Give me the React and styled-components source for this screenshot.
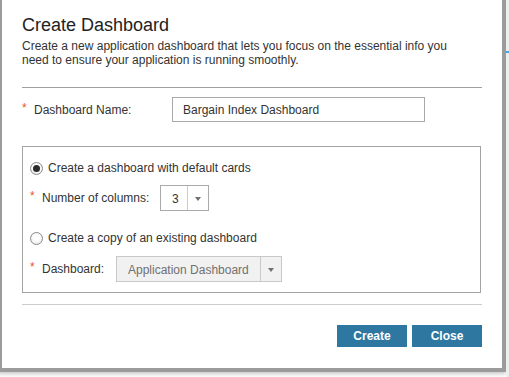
import React from 'react';
import styled, { createGlobalStyle } from 'styled-components';

const GlobalStyle = createGlobalStyle`
  html, body {
    margin: 0;
    padding: 0;
    background: #ffffff;
    overflow: hidden;
  }
  body {
    font-family: "Liberation Sans", Arial, sans-serif;
    color: #333;
  }
`;

const Page = styled.div`
  display: flex;
  width: 509px;
  height: 377px;
  background: #fff;
`;

const Dialog = styled.div`
  box-sizing: border-box;
  flex: none;
  width: 508px;
  height: 376px;
  margin: -4px 0 0 -2px;
  border: 4px solid #9b9b9b;
  background: #fff;
  box-shadow: 0 2px 4px rgba(0, 0, 0, 0.22);
  padding: 14px 20px 0 20px;
  display: flex;
  flex-direction: column;
`;

const Backdrop = styled.div`
  flex: 1;
  background: #eeeeee;
  display: flex;
  flex-direction: column;
`;

const BackdropTick = styled.div`
  margin-top: 51px;
  height: 2px;
  background: #4aa3d6;
`;

const Title = styled.h1`
  margin: 0;
  font-size: 18px;
  line-height: 22px;
  font-weight: normal;
  color: #222;
`;

const Description = styled.p`
  margin: 3px 0 0 0;
  width: 440px;
  font-size: 12px;
  line-height: 14px;
  color: #333;
`;

const Rule = styled.div`
  height: 1px;
  background: ${p => p.$light ? '#cccccc' : '#a0a0a0'};
  margin-top: ${p => p.$top}px;
`;

const FieldRow = styled.div`
  display: flex;
  align-items: center;
  margin-top: ${p => p.$top || 0}px;
`;

const LabelCell = styled.div`
  display: flex;
  align-items: center;
  width: ${p => p.$width}px;
  flex: none;
  font-size: 12px;
  color: #333;
`;

const Required = styled.span`
  color: #e0592a;
  font-size: 12px;
  width: 12px;
  align-self: flex-start;
  margin-top: -2px;
`;

const TextInput = styled.div`
  box-sizing: border-box;
  width: 253px;
  height: 25px;
  border: 1px solid #a9a9a9;
  padding: 1px 10px 0 10px;
  display: flex;
  align-items: center;
  font-size: 12px;
  color: #333;
`;

const OptionsBox = styled.div`
  box-sizing: border-box;
  border: 1px solid #a3a3a3;
  margin-top: 24px;
  width: 459px;
  height: 147px;
  padding: 14px 7px 0 7px;
  display: flex;
  flex-direction: column;
`;

const RadioRow = styled.label`
  display: flex;
  align-items: center;
  gap: 5px;
  font-size: 12px;
  color: #333;
  margin-top: ${p => p.$top || 0}px;
`;

const RadioDot = styled.span`
  box-sizing: border-box;
  width: 13px;
  height: 13px;
  border-radius: 50%;
  border: 1px solid #8a8a8a;
  background: radial-gradient(circle at 50% 40%, #ffffff 30%, #e4e4e4 100%);
  display: flex;
  align-items: center;
  justify-content: center;

  &::after {
    content: '';
    width: 7px;
    height: 7px;
    border-radius: 50%;
    background: ${p => p.$checked ? '#2a2a2a' : 'transparent'};
  }
`;

const Select = styled.div`
  box-sizing: border-box;
  display: flex;
  width: ${p => p.$width}px;
  height: 26px;
  border: 1px solid ${p => p.$disabled ? '#c8c8c8' : '#aaaaaa'};
  background: ${p => p.$disabled ? '#f1f1f1' : '#fff'};
  font-size: 12px;
  color: ${p => p.$disabled ? '#707070' : '#333'};
`;

const SelectValue = styled.div`
  flex: 1;
  display: flex;
  align-items: center;
  padding-left: 11px;
  padding-top: 1px;
`;

const SelectToggle = styled.div`
  width: 20px;
  border-left: 1px solid ${p => p.$disabled ? '#c8c8c8' : '#cccccc'};
  display: flex;
  align-items: center;
  justify-content: center;

  &::after {
    content: '';
    border-left: 3.5px solid transparent;
    border-right: 3.5px solid transparent;
    border-top: 4px solid #707070;
    margin-top: 1px;
  }
`;

const Footer = styled.div`
  display: flex;
  justify-content: flex-end;
  gap: 5px;
  margin-top: 20px;
`;

const Button = styled.button`
  width: 70px;
  height: 22px;
  border: none;
  background: #2e77a1;
  color: #fff;
  font-family: "Liberation Sans", Arial, sans-serif;
  font-weight: bold;
  font-size: 12px;
  padding: 0;
`;

const App = () => {
  return (
    <>
      <GlobalStyle />
      <Page>
        <Dialog>
          <Title>Create Dashboard</Title>
          <Description>
            Create a new application dashboard that lets you focus on the essential info you
            need to ensure your application is running smoothly.
          </Description>
          <Rule $top={20} />

          <FieldRow $top={9}>
            <LabelCell $width={150}>
              <Required>*</Required>Dashboard Name:
            </LabelCell>
            <TextInput>Bargain Index Dashboard</TextInput>
          </FieldRow>

          <OptionsBox>
            <RadioRow>
              <RadioDot $checked />
              Create a dashboard with default cards
            </RadioRow>
            <FieldRow $top={10}>
              <LabelCell $width={130}>
                <Required>*</Required>Number of columns:
              </LabelCell>
              <Select $width={49}>
                <SelectValue>3</SelectValue>
                <SelectToggle />
              </Select>
            </FieldRow>
            <RadioRow $top={20}>
              <RadioDot />
              Create a copy of an existing dashboard
            </RadioRow>
            <FieldRow $top={11}>
              <LabelCell $width={86}>
                <Required>*</Required>Dashboard:
              </LabelCell>
              <Select $width={166} $disabled>
                <SelectValue>Application Dashboard</SelectValue>
                <SelectToggle $disabled />
              </Select>
            </FieldRow>
          </OptionsBox>

          <Rule $light $top={11} />
          <Footer>
            <Button>Create</Button>
            <Button>Close</Button>
          </Footer>
        </Dialog>
        <Backdrop>
          <BackdropTick />
        </Backdrop>
      </Page>
    </>
  );
};

export default App;
